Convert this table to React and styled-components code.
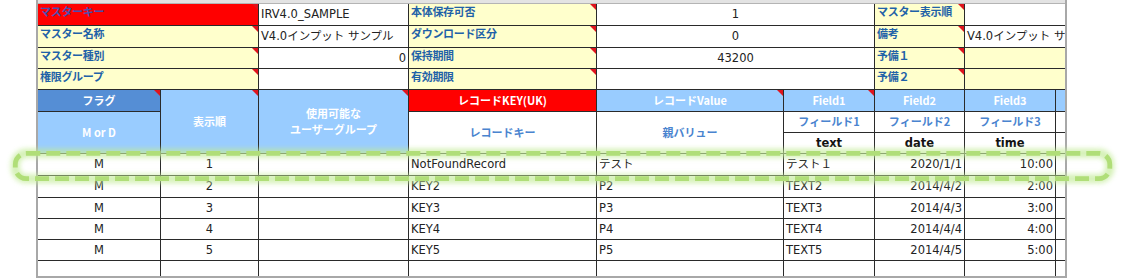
import React from "react";
import styled, { createGlobalStyle } from "styled-components";

const Global = createGlobalStyle`
  html, body { margin: 0; padding: 0; background: #ffffff; }
  body { font-family: "DejaVu Sans", "Noto Sans CJK JP", sans-serif; }
`;

const Page = styled.div`
  position: relative;
  width: 1123px;
  height: 278px;
  overflow: hidden;
  background: #ffffff;
`;

const Sheet = styled.div`
  margin-left: 36px;
  width: 1031px;
  height: 278px;
  box-sizing: border-box;
  border-left: 2px solid #a8a8a8;
  border-right: 2px solid #a8a8a8;
  border-bottom: 2px solid #a8a8a8;
  display: flex;
  flex-direction: column;
  overflow: hidden;
`;

const ColumnStrip = styled.div`
  height: 3px;
  flex: none;
  background: #e3e3e3;
  border-bottom: 1px solid #b4b4b4;
`;

const Grid = styled.div`
  flex: 1;
  overflow: hidden;
  display: grid;
  grid-template-columns: 122px 97px 149px 187px 186px 90px 89px 90px 9px;
  grid-template-rows: 21px 21px 20px 20px 21px 20px 20px 21px 21px 20px 20px 20px 20px;
  gap: 1px;
  background: #2a2a2a;
  align-content: start;
`;

const Cell = styled.div`
  position: relative;
  grid-column: span ${(p) => p.$span || 1};
  grid-row: span ${(p) => p.$rows || 1};
  background: ${(p) => p.$bg || "#ffffff"};
  color: ${(p) => p.$color || "#222222"};
  font-weight: ${(p) => (p.$bold ? 700 : 400)};
  font-size: ${(p) => p.$size || 11.5}px;
  line-height: 1.25;
  display: flex;
  align-items: ${(p) => (p.$top ? "flex-start" : "center")};
  justify-content: ${(p) =>
    p.$align === "center" ? "center" : p.$align === "right" ? "flex-end" : "flex-start"};
  text-align: ${(p) => p.$align || "left"};
  padding: ${(p) => (p.$top ? "1px 2px 0 2px" : "0 2px")};
  white-space: nowrap;
  overflow: hidden;
  box-sizing: border-box;
`;

const Label = styled(Cell).attrs({ $bold: true, $top: true, $size: 11 })`
  color: ${(p) => p.$ink || "#1f62a8"};
  font-family: "Noto Sans CJK JP", sans-serif;
  letter-spacing: -0.3px;
`;

const Head = styled(Cell).attrs({ $bold: true, $align: "center", $size: 11 })`
  color: #ffffff;
  font-family: "Noto Sans CJK JP", "DejaVu Sans", sans-serif;
  white-space: normal;
  line-height: 1.45;
`;

const SubHead = styled(Cell).attrs({ $bold: true, $align: "center", $size: 11 })`
  color: #4a84cf;
  font-family: "Noto Sans CJK JP", "DejaVu Sans", sans-serif;
`;

const TypeHead = styled(Cell).attrs({ $bold: true, $align: "center", $size: 11.5 })`
  color: #111111;
`;

const Mark = styled.span`
  position: absolute;
  top: 0;
  right: 0;
  width: 0;
  height: 0;
  border-top: 6px solid #e0141e;
  border-left: 6px solid transparent;
`;

const Highlight = styled.svg`
  position: absolute;
  left: 0;
  top: 0;
  pointer-events: none;
`;

const YELLOW = "#ffffcc";
const LIGHT = "#99ccff";
const DARK = "#558ed5";
const RED = "#ff0000";

const rows = [
  ["M", "1", "", "NotFoundRecord", "テスト", "テスト１", "2020/1/1", "10:00"],
  ["M", "2", "", "KEY2", "P2", "TEXT2", "2014/4/2", "2:00"],
  ["M", "3", "", "KEY3", "P3", "TEXT3", "2014/4/3", "3:00"],
  ["M", "4", "", "KEY4", "P4", "TEXT4", "2014/4/4", "4:00"],
  ["M", "5", "", "KEY5", "P5", "TEXT5", "2014/4/5", "5:00"],
  ["", "", "", "", "", "", "", ""],
];

export default function App() {
  return (
    <Page>
      <Global />
      <Sheet>
        <ColumnStrip />
        <Grid>
          <Label $span={2} $bg={RED} $ink="#4b4fb0">マスターキー<Mark /></Label>
          <Cell>IRV4.0_SAMPLE</Cell>
          <Label $bg={YELLOW}>本体保存可否<Mark /></Label>
          <Cell $span={2} $align="center">1</Cell>
          <Label $bg={YELLOW}>マスター表示順<Mark /></Label>
          <Cell $span={2} />

          <Label $span={2} $bg={YELLOW}>マスター名称<Mark /></Label>
          <Cell>V4.0インプット サンプル</Cell>
          <Label $bg={YELLOW}>ダウンロード区分<Mark /></Label>
          <Cell $span={2} $align="center">0</Cell>
          <Label $bg={YELLOW}>備考<Mark /></Label>
          <Cell $span={2}>V4.0インプット サンプル</Cell>

          <Label $span={2} $bg={YELLOW}>マスター種別<Mark /></Label>
          <Cell $align="right">0</Cell>
          <Label $bg={YELLOW}>保持期間<Mark /></Label>
          <Cell $span={2} $align="center">43200</Cell>
          <Label $bg={YELLOW}>予備１<Mark /></Label>
          <Cell $span={2} $bg={YELLOW} />

          <Label $span={2} $bg={YELLOW}>権限グループ<Mark /></Label>
          <Cell />
          <Label $bg={YELLOW}>有効期限<Mark /></Label>
          <Cell $span={2} />
          <Label $bg={YELLOW}>予備２<Mark /></Label>
          <Cell $span={2} $bg={YELLOW} />

          <Head $bg={DARK}>フラグ<Mark /></Head>
          <Head $bg={LIGHT} $rows={3}>表示順<Mark /></Head>
          <Head $bg={LIGHT} $rows={3}>使用可能な<br />ユーザーグループ<Mark /></Head>
          <Head $bg={RED}>レコードKEY(UK)</Head>
          <Head $bg={LIGHT}>レコードValue<Mark /></Head>
          <Head $bg={LIGHT}>Field1<Mark /></Head>
          <Head $bg={LIGHT}>Field2</Head>
          <Head $bg={LIGHT}>Field3</Head>
          <Head $bg={LIGHT} />

          <Head $bg={LIGHT} $rows={2}>M or D</Head>
          <SubHead $rows={2}>レコードキー</SubHead>
          <SubHead $rows={2}>親バリュー</SubHead>
          <SubHead>フィールド1</SubHead>
          <SubHead>フィールド2</SubHead>
          <SubHead>フィールド3</SubHead>
          <Cell />

          <TypeHead>text</TypeHead>
          <TypeHead>date</TypeHead>
          <TypeHead>time</TypeHead>
          <Cell />

          {rows.map((r, i) => (
            <React.Fragment key={i}>
              <Cell $align="center">{r[0]}</Cell>
              <Cell $align="center">{r[1]}</Cell>
              <Cell>{r[2]}</Cell>
              <Cell>{r[3]}</Cell>
              <Cell>{r[4]}</Cell>
              <Cell>{r[5]}</Cell>
              <Cell $align="right">{r[6]}</Cell>
              <Cell $align="right">{r[7]}</Cell>
              <Cell />
            </React.Fragment>
          ))}
        </Grid>
      </Sheet>
      <Highlight width="1123" height="278" viewBox="0 0 1123 278">
        <defs>
          <filter id="glow" x="-5%" y="-50%" width="110%" height="200%">
            <feGaussianBlur stdDeviation="2.6" />
          </filter>
        </defs>
        <rect
          x="15.3"
          y="153.3"
          width="1094.5"
          height="25.4"
          rx="11"
          ry="11"
          fill="none"
          stroke="#c3eb98"
          strokeWidth="9"
          opacity="0.7"
          filter="url(#glow)"
        />
        <rect
          x="15.3"
          y="153.3"
          width="1094.5"
          height="25.4"
          rx="11"
          ry="11"
          fill="none"
          stroke="#b0de78"
          strokeWidth="4.8"
          strokeDasharray="14 6"
        />
      </Highlight>
    </Page>
  );
}
